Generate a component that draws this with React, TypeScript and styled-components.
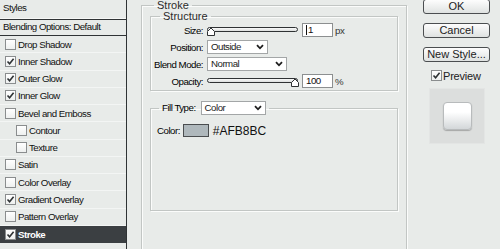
import React from "react";
import styled, { createGlobalStyle } from "styled-components";

const UI_FONT = `"Liberation Sans", Arial, sans-serif`;
const WIDE_FONT = `"Liberation Sans", Arial, sans-serif`;

const GlobalStyle = createGlobalStyle`
  html, body { margin: 0; padding: 0; background: #e8ebe9; }
  * { box-sizing: border-box; }
`;

const Window = styled.div`
  width: 500px;
  height: 249px;
  overflow: hidden;
  display: flex;
  background: #e8ebe9;
  color: #101010;
  font-family: ${UI_FONT};
  font-size: 9.7px;
  letter-spacing: -0.5px;
`;

/* ---------- Sidebar ---------- */
const Sidebar = styled.div`
  width: 127px;
  flex: none;
  border-right: 1px solid #2f3335;
  display: flex;
  flex-direction: column;
`;

const SidebarHeader = styled.div`
  height: 20px;
  padding: 0 0 0 3px;
  line-height: 16px;
  border-bottom: 1px solid #2f3335;
  box-shadow: inset 0 -1px 0 #f6f7f6;
`;

const BlendingRow = styled.div`
  height: 16px;
  padding-left: 3px;
  line-height: 14px;
  border-bottom: 1px solid #2f3335;
  white-space: nowrap;
`;

const StyleRow = styled.div<{ $indent?: boolean; $active?: boolean }>`
  height: 17.27px;
  flex: none;
  display: flex;
  align-items: center;
  gap: 2px;
  padding-left: ${(p) => (p.$indent ? 16 : 5)}px;
  background: ${(p) => (p.$active ? "#3b3f42" : "transparent")};
  color: ${(p) => (p.$active ? "#ffffff" : "#101010")};
  font-weight: ${(p) => (p.$active ? "bold" : "normal")};
  border-bottom: 1px solid ${(p) => (p.$active ? "#3b3f42" : "#f3f5f4")};
  white-space: nowrap;
`;

const Box = styled.span<{ $size?: number }>`
  width: ${(p) => p.$size ?? 11}px;
  height: ${(p) => p.$size ?? 11}px;
  flex: none;
  display: inline-flex;
  align-items: center;
  justify-content: center;
  border: 1px solid #8a8d8e;
  background: linear-gradient(#ffffff, #eef0ef);
`;

const Check = ({ checked, size }: { checked: boolean; size?: number }) => (
  <Box $size={size}>
    {checked && (
      <svg width="9" height="9" viewBox="0 0 9 9">
        <path d="M1.5 4.5 L3.6 6.8 L7.6 1.8" fill="none" stroke="#2e3234" strokeWidth="1.6" />
      </svg>
    )}
  </Box>
);

/* ---------- Main ---------- */
const Main = styled.div`
  flex: 1;
  min-width: 0;
  display: flex;
  padding-left: 14px;
`;

const Group = styled.fieldset`
  margin: 0;
  min-width: 0;
  border: 1px solid #c2c6c4;
  box-shadow: inset 1px 1px 0 #fbfcfb, 1px 1px 0 #fbfcfb;
`;

const StrokeGroup = styled(Group)`
  width: 266px;
  flex: none;
  height: 320px;
  margin-top: 1px;
  padding: 2px 8px 0 8px;
`;

const Legend = styled.legend<{ $offset: number }>`
  margin-left: ${(p) => p.$offset}px;
  padding: 0 3px;
  font-family: ${WIDE_FONT};
  font-size: 11px;
  letter-spacing: 0;
  line-height: 9px;
  color: #2c2c2c;
`;

const StructureGroup = styled(Group)`
  padding: 2px 8px 2px 0;
`;

const FieldGrid = styled.div`
  display: grid;
  grid-template-columns: 52px 1fr;
  column-gap: 4px;
  row-gap: 3px;
  align-items: center;
`;

const Label = styled.span`
  text-align: right;
  color: #000;
  white-space: nowrap;
`;

const Controls = styled.div`
  display: flex;
  align-items: center;
  height: 14px;
`;

const NumberBox = styled.div`
  width: 31px;
  height: 14px;
  margin-left: 3px;
  border: 1px solid #8c8f90;
  background: #fff;
  padding-left: 3px;
  display: flex;
  align-items: center;
  line-height: 12px;
`;

const Caret = styled.span`
  width: 1px;
  height: 10px;
  background: #111;
  margin-right: 1px;
`;

const Unit = styled.span`
  margin-left: 2px;
  color: #333;
`;

const SelectBox = styled.div<{ $width: number }>`
  width: ${(p) => p.$width}px;
  height: 14px;
  border: 1px solid #a3a6a7;
  background: #fff;
  display: flex;
  align-items: center;
  justify-content: space-between;
  padding: 0 3px 0 3px;
  line-height: 12px;
  color: #222;
`;

const Chevron = () => (
  <svg width="8" height="6" viewBox="0 0 8 6">
    <path d="M1 1.2 L4 4.3 L7 1.2" fill="none" stroke="#1e1e1e" strokeWidth="1.8" />
  </svg>
);

const Select = ({ value, width }: { value: string; width: number }) => (
  <SelectBox $width={width}>
    <span>{value}</span>
    <Chevron />
  </SelectBox>
);

const Slider = ({ pos }: { pos: number }) => (
  <svg width="92" height="14" viewBox="0 0 92 14">
    <defs>
      <linearGradient id="trk" x1="0" y1="0" x2="0" y2="1">
        <stop offset="0" stopColor="#ffffff" />
        <stop offset="1" stopColor="#d6d9d8" />
      </linearGradient>
    </defs>
    <rect x="0.5" y="4.5" width="90" height="4" rx="2" fill="url(#trk)" stroke="#2f3234" />
    <path
      d={`M${pos - 3.5} 12.5 L${pos - 3.5} 8.5 L${pos} 5 L${pos + 3.5} 8.5 L${pos + 3.5} 12.5 Z`}
      fill="#ffffff"
      stroke="#2f3234"
    />
  </svg>
);

const FillGroup = styled(Group)`
  margin-top: 10px;
  padding: 9px 0 73px 6px;
`;

const FillLegend = styled.legend`
  margin-left: 2px;
  padding: 0 3px;
  display: flex;
  align-items: center;
  gap: 5px;
  line-height: 12px;
`;

const ColorRow = styled.div`
  display: flex;
  align-items: center;
  height: 13px;
`;

const Swatch = styled.span`
  width: 26px;
  height: 13px;
  margin-left: 3px;
  background: #afb8bc;
  border: 1px solid #4a4d4f;
`;

const HexText = styled.span`
  margin-left: 4px;
  font-family: ${WIDE_FONT};
  font-size: 12px;
  letter-spacing: 0;
  color: #111;
`;

/* ---------- Buttons column ---------- */
const ButtonColumn = styled.div`
  width: 67px;
  flex: none;
  margin-left: 16px;
  margin-top: -1px;
  display: flex;
  flex-direction: column;
  font-family: ${WIDE_FONT};
  font-size: 11px;
  letter-spacing: 0;
`;

const Button = styled.div`
  height: 15px;
  border: 1px solid #4b4e50;
  border-radius: 3px;
  background: linear-gradient(#fdfdfd, #dfe2e1);
  display: flex;
  align-items: center;
  justify-content: center;
  color: #222;
  line-height: 13px;
  & + & {
    margin-top: 9px;
  }
`;

const PreviewToggle = styled.div`
  margin-top: 8px;
  margin-left: 8px;
  display: flex;
  align-items: center;
  gap: 1px;
  height: 11px;
  color: #222;
  letter-spacing: -0.2px;
`;

const PreviewFrame = styled.div`
  margin-top: 7px;
  margin-left: 6px;
  width: 56px;
  height: 56px;
  background: #dcdedd;
  border: 1px solid #e3e5e4;
  display: flex;
  align-items: center;
  justify-content: center;
`;

const PreviewSwatch = styled.div`
  width: 29px;
  height: 28px;
  border-radius: 4px;
  border: 1px solid #b8bbbc;
  background: linear-gradient(#ffffff 35%, #d3d7d9);
  box-shadow: 0 1px 1px rgba(0, 0, 0, 0.25);
`;

const styles: { name: string; checked: boolean; indent?: boolean; active?: boolean }[] = [
  { name: "Drop Shadow", checked: false },
  { name: "Inner Shadow", checked: true },
  { name: "Outer Glow", checked: true },
  { name: "Inner Glow", checked: true },
  { name: "Bevel and Emboss", checked: false },
  { name: "Contour", checked: false, indent: true },
  { name: "Texture", checked: false, indent: true },
  { name: "Satin", checked: false },
  { name: "Color Overlay", checked: false },
  { name: "Gradient Overlay", checked: true },
  { name: "Pattern Overlay", checked: false },
  { name: "Stroke", checked: true, active: true },
];

export default function App() {
  return (
    <Window>
      <GlobalStyle />
      <Sidebar>
        <SidebarHeader>Styles</SidebarHeader>
        <BlendingRow>Blending Options: Default</BlendingRow>
        {styles.map((s) => (
          <StyleRow key={s.name} $indent={s.indent} $active={s.active}>
            <Check checked={s.checked} />
            <span>{s.name}</span>
          </StyleRow>
        ))}
      </Sidebar>
      <Main>
        <StrokeGroup>
          <Legend $offset={4}>Stroke</Legend>
          <StructureGroup>
            <Legend $offset={9}>Structure</Legend>
            <FieldGrid>
              <Label>Size:</Label>
              <Controls>
                <Slider pos={4} />
                <NumberBox>
                  <Caret />
                  <span>1</span>
                </NumberBox>
                <Unit>px</Unit>
              </Controls>
              <Label>Position:</Label>
              <Controls>
                <Select value="Outside" width={61} />
              </Controls>
              <Label>Blend Mode:</Label>
              <Controls>
                <Select value="Normal" width={80} />
              </Controls>
              <Label>Opacity:</Label>
              <Controls>
                <Slider pos={88} />
                <NumberBox>100</NumberBox>
                <Unit>%</Unit>
              </Controls>
            </FieldGrid>
          </StructureGroup>
          <FillGroup>
            <FillLegend>
              <Label>Fill Type:</Label>
              <Select value="Color" width={65} />
            </FillLegend>
            <ColorRow>
              <Label>Color:</Label>
              <Swatch />
              <HexText>#AFB8BC</HexText>
            </ColorRow>
          </FillGroup>
        </StrokeGroup>
        <ButtonColumn>
          <Button>OK</Button>
          <Button>Cancel</Button>
          <Button>New Style...</Button>
          <PreviewToggle>
            <Check checked size={11} />
            <span>Preview</span>
          </PreviewToggle>
          <PreviewFrame>
            <PreviewSwatch />
          </PreviewFrame>
        </ButtonColumn>
      </Main>
    </Window>
  );
}
